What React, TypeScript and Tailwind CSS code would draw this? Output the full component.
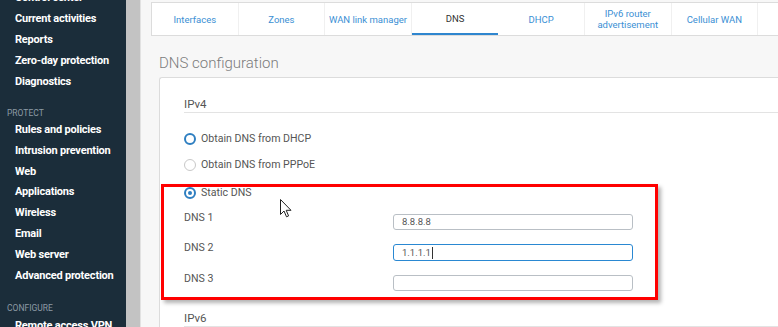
import React from "react";

const group1 = ["Control center", "Current activities", "Reports", "Zero-day protection", "Diagnostics"];
const group2 = [
  "Rules and policies",
  "Intrusion prevention",
  "Web",
  "Applications",
  "Wireless",
  "Email",
  "Web server",
  "Advanced protection",
];

const tabs = [
  { label: "Interfaces" },
  { label: "Zones" },
  { label: "WAN link manager" },
  { label: "DNS", active: true },
  { label: "DHCP" },
  { label: "IPv6 router\nadvertisement" },
  { label: "Cellular WAN" },
  { label: "" },
];

function Radio({ state }: { state: "on" | "off" | "disabled" }) {
  if (state === "disabled")
    return <span className="inline-block w-[12px] h-[12px] rounded-full border-[1.5px] border-[#c8c8c8] bg-white" />;
  return (
    <span className="inline-flex items-center justify-center w-[12px] h-[12px] rounded-full border-2 border-[#2f7fc1] bg-white">
      {state === "on" && <span className="block w-[4px] h-[4px] rounded-full bg-[#2f7fc1]" />}
    </span>
  );
}

export default function App() {
  return (
    <div
      className="relative w-[778px] h-[327px] overflow-hidden flex bg-[#f7f7f7]"
      style={{ fontFamily: "Roboto, 'Noto Sans', sans-serif" }}
    >
      {/* Sidebar */}
      <div className="w-[126px] shrink-0 bg-[#1b2d3a] text-white">
        <div className="-mt-[13px]">
          {group1.map((t) => (
            <div key={t} className="h-[21px] leading-[21px] pl-[15px] text-[11px] font-bold whitespace-nowrap tracking-[-0.2px]">
              {t}
            </div>
          ))}
          <div className="mt-[14px] h-[14px] leading-[14px] pl-[7px] text-[8.5px] text-[#8d9ba5]">PROTECT</div>
          {group2.map((t) => (
            <div key={t} className="h-[20.8px] leading-[20.8px] pl-[15px] text-[11px] font-bold whitespace-nowrap tracking-[-0.2px]">
              {t}
            </div>
          ))}
          <div className="mt-[14.6px] h-[14px] leading-[14px] pl-[7px] text-[8.5px] text-[#8d9ba5]">CONFIGURE</div>
          <div className="h-[21px] leading-[21px] pl-[15px] text-[11px] font-bold whitespace-nowrap tracking-[-0.2px]">
            Remote access VPN
          </div>
        </div>
      </div>
      {/* scroll strip */}
      <div className="w-[15px] shrink-0 bg-[#c3c3c3] border-r border-[#e2e2e2]" />

      {/* Main */}
      <div className="flex-1 min-w-0 pl-[10px] pt-[2px]">
        <div className="flex h-[34px] bg-white border border-[#dcdcdc] border-r-0 w-[640px]">
          {tabs.map((t, i) => (
            <div
              key={i}
              className={`w-[86.6px] shrink-0 flex items-center justify-center text-center text-[9.5px] leading-[11px] whitespace-pre ${
                t.active ? "text-[#333] border-b-2 border-[#2f86cf]" : "text-[#3b8fd4] border-r border-[#f0f0f0]"
              }`}
            >
              {t.label}
            </div>
          ))}
        </div>

        <div className="pl-[8px] mt-[17px] h-[24px] leading-[20px] text-[15px] text-[#7b7b7b] font-light">
          DNS configuration
        </div>

        <div className="relative ml-[8px] h-[260px] bg-white border-l border-t border-[#dcdcdc] rounded-tl-[3px] pt-[18px] pl-[24px] text-[10.6px] text-[#555]">
          <div className="h-[17px] leading-[16px] border-b border-[#e3e3e3] text-[11.5px]">IPv4</div>

          <div className="mt-[16px] h-[20px] flex items-center gap-[5px]">
            <Radio state="off" />
            <span>Obtain DNS from DHCP</span>
          </div>
          <div className="mt-[6px] h-[20px] flex items-center gap-[5px]">
            <Radio state="disabled" />
            <span>Obtain DNS from PPPoE</span>
          </div>
          <div className="mt-[8px] h-[20px] flex items-center gap-[5px]">
            <Radio state="on" />
            <span>Static DNS</span>
          </div>

          <div className="mt-[7px] flex items-start h-[20px]">
            <span className="w-[209px] leading-[16px]">DNS 1</span>
            <div className="mt-[4px] w-[240px] h-[16px] border border-[#b9bfc5] rounded-[3px] pl-[8px] text-[9.5px] leading-[14px] text-[#555]">
              8.8.8.8
            </div>
          </div>
          <div className="mt-[10px] flex items-start h-[21px]">
            <span className="w-[209px] leading-[16px]">DNS 2</span>
            <div className="mt-[4px] w-[240px] h-[17px] border border-[#2a88d2] rounded-[3px] pl-[8px] text-[9.5px] leading-[15px] text-[#555] flex items-center">
              1.1.1.1<span className="inline-block w-px h-[12px] bg-[#333] ml-px" />
            </div>
          </div>
          <div className="mt-[10px] flex items-start h-[20px]">
            <span className="w-[209px] leading-[16px]">DNS 3</span>
            <div className="mt-[4px] w-[240px] h-[16px] border border-[#b9bfc5] rounded-[3px]" />
          </div>

          <div className="mt-[19px] h-[17px] leading-[16px] border-b border-[#e3e3e3] text-[11.5px]">IPv6</div>

          {/* highlight annotation */}
          <div className="absolute left-[1px] top-[106px] w-[497px] h-[116px] border-[3px] border-[#ff0000] shadow-[3px_3px_4px_rgba(0,0,0,0.3)] pointer-events-none" />
        </div>
      </div>

      {/* mouse cursor */}
      <svg className="absolute left-[280px] top-[199px]" width="12" height="19" viewBox="0 0 12 19">
        <path d="M0.5 0.5 L0.5 15.5 L4 12 L6.5 17.8 L8.6 16.9 L6.2 11.3 L11 11.3 Z" fill="white" stroke="#222" strokeWidth="1" strokeLinejoin="round" />
      </svg>
    </div>
  );
}
